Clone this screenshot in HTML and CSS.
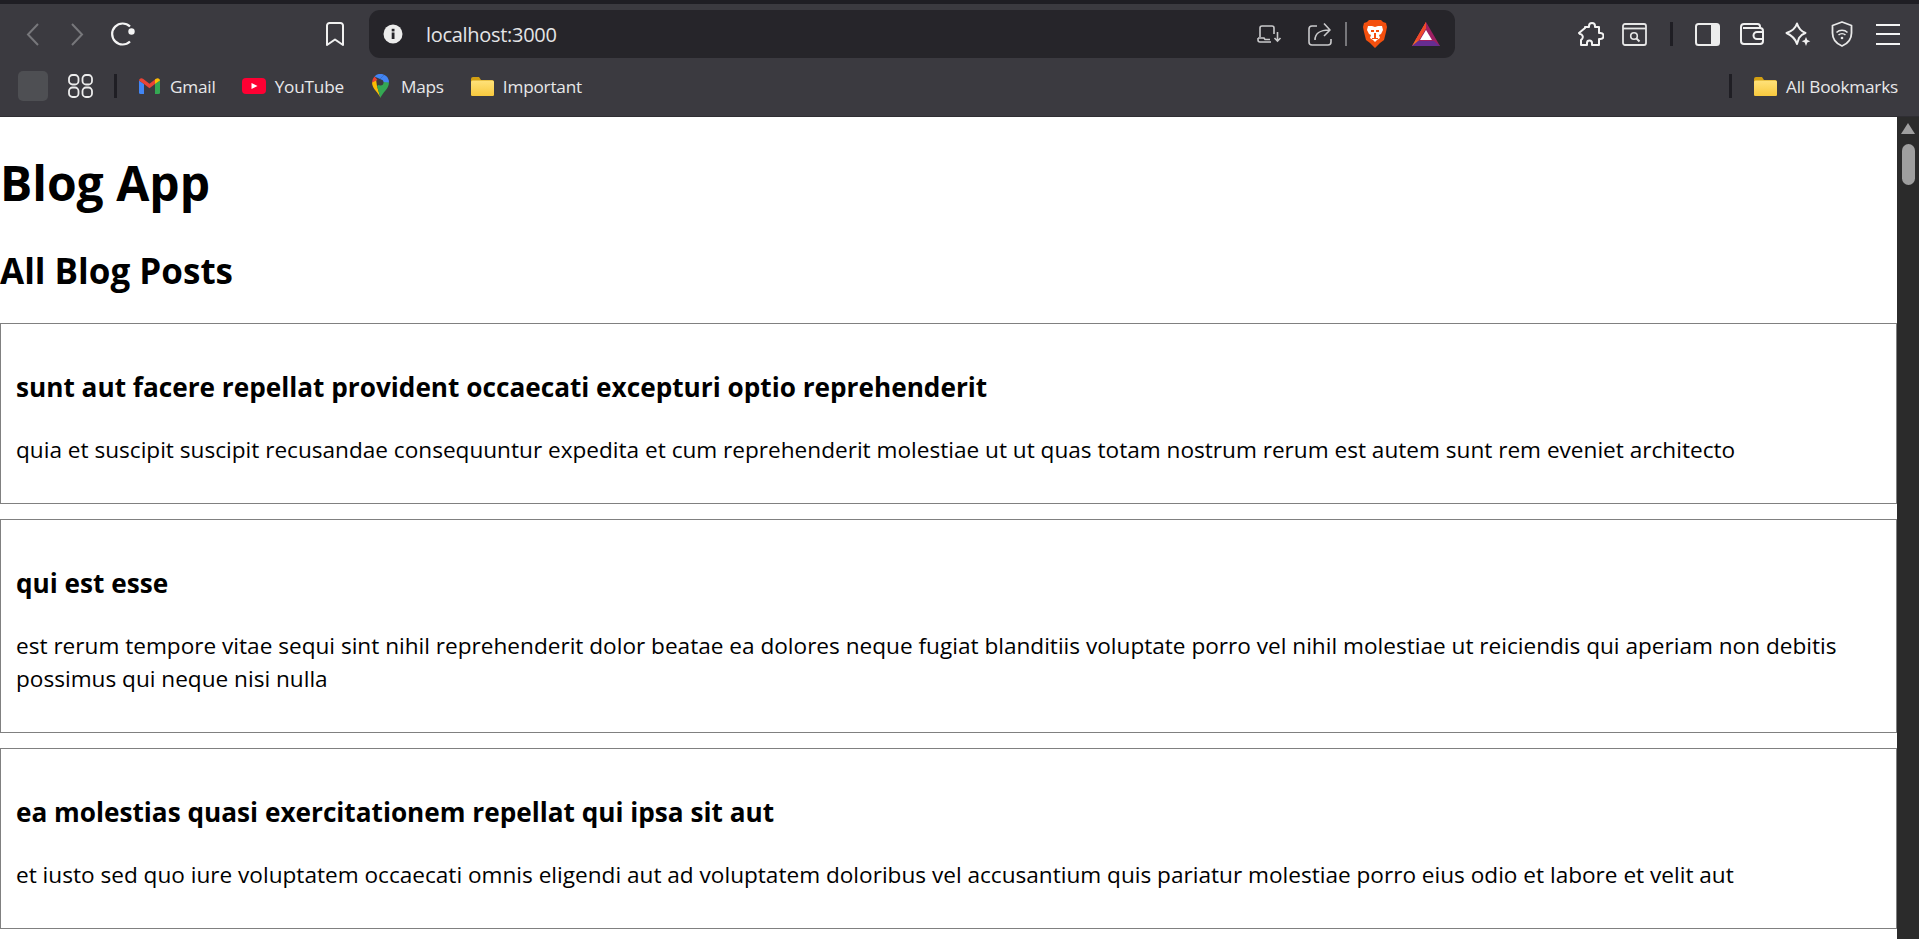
FILE: index.html
```html
<!DOCTYPE html>
<html lang="en">
<head>
    <meta charset="UTF-8">
    <meta name="viewport" content="width=device-width, initial-scale=1.0">
    <title>Blog App</title>
    <link rel="stylesheet" href="styles.css">
</head>
<body>

    <header class="chrome">
        <div class="toolbar">
            <svg class="back" width="13" height="23" viewBox="0 0 13 23" fill="none" stroke="#77777b" stroke-width="2"><path d="M12 1 2 11.5 12 22"/></svg>
            <svg class="forward" width="13" height="23" viewBox="0 0 13 23" fill="none" stroke="#77777b" stroke-width="2"><path d="M1 1 11 11.5 1 22"/></svg>
            <svg class="reload" width="26" height="24" viewBox="0 0 26 24" fill="none" stroke="#f4f4f4" stroke-width="2.2"><path d="M20 4.500A10.500 10.500 0 1 0 20 19.500"/><circle cx="21.500" cy="9.500" r="3.200" fill="#f4f4f4" stroke="none"/></svg>
            <svg class="bookmark" width="18" height="24" viewBox="0 0 18 24" fill="none" stroke="#f0f0f0" stroke-width="2" stroke-linejoin="round"><path d="M3.500 1h11A2.500 2.500 0 0 1 17 3.500V23l-8-5.500L1 23V3.500A2.500 2.500 0 0 1 3.500 1z"/></svg>

            <div class="urlbar">
                <svg class="info" width="20" height="20" viewBox="0 0 20 20"><circle cx="10" cy="10" r="9.500" fill="#ececec"/><rect x="8.700" y="8.500" width="2.800" height="6.500" fill="#26252a"/><rect x="8.700" y="4.800" width="2.800" height="2.600" fill="#26252a"/></svg>
                <span class="url">localhost:3000</span>
                <svg class="install" width="25" height="18" viewBox="0 0 25 18" fill="none" stroke="#c9c9cb" stroke-width="1.600"><path d="M17 9V3a2 2 0 0 0-2-2H5a2 2 0 0 0-2 2v9"/><path d="M1 13h6l1 1.500h5M1 13v2a2 2 0 0 0 2 2h11"/><path d="M20.500 7v9M17.500 13l3 3.200 3-3.200"/></svg>
                <svg class="share" width="24" height="24" viewBox="0 0 24 24" fill="none" stroke="#c9c9cb" stroke-width="1.600" stroke-linejoin="round"><path d="M9 4H4a3 3 0 0 0-3 3v13a3 3 0 0 0 3 3h16a3 3 0 0 0 3-3v-3"/><path d="M7 18c0-6 5-10 14-10M16 1.500l6 6.500-6 6"/></svg>
                <span class="urlbar-sep"></span>
                <svg class="brave" width="24" height="28" viewBox="0 0 24 28"><path d="M6 0h12l2 2 3 1 1 4-1 5-2 8-4 3-5 5-5-5-4-3-2-8-1-5 1-4 3-1z" fill="#f4500f"/><path d="M5 6h4l3 1 3-1h4l1 4-2 4-2 1 1 3-3 2-2 2-2-2-3-2 1-3-2-1-2-4z" fill="#fff"/><path d="M8 10h3v2H8zM13 10h3v2h-3zM11 13h2v5h-2zM9 18h6v1H9z" fill="#f4500f"/></svg>
                <svg class="bat" width="28" height="24" viewBox="0 0 28 24"><path d="M14 0 0 24h28z" fill="#9e1f63"/><path d="M14 0 0 24l5-3 9-15z" fill="#f26a21"/><path d="M14 0 3 19l4-1 7-12z" fill="#f0482a"/><path d="M0 24l6-5h16l6 5z" fill="#662d91"/><path d="M14 8l-6 10h12z" fill="#fff"/></svg>
            </div>

            <svg class="puzzle" width="26" height="24" viewBox="0 0 26 24" fill="none" stroke="#f2f2f2" stroke-width="2" stroke-linejoin="round"><path d="M7 5h4V4a3 3 0 0 1 6 0v1h4v6h1.500a3 3 0 0 1 0 6H21v6h-7v-2a2.500 2.500 0 0 0-5 0v2H3v-5l1-1a3 3 0 0 0-2-5l-1-1 6-5z"/></svg>
            <svg class="reader" width="25" height="23" viewBox="0 0 25 23" fill="none" stroke="#e6e6e6" stroke-width="1.800"><rect x="1" y="1" width="23" height="21" rx="2"/><path d="M1 5.500h23"/><circle cx="12" cy="13" r="3.300" stroke-width="1.600"/><path d="M14.500 15.500l3 3" stroke-width="2"/></svg>
            <span class="tool-sep"></span>
            <svg class="sidebar" width="25" height="23" viewBox="0 0 25 23"><rect x="1" y="1" width="23" height="21" rx="2.500" fill="none" stroke="#ececec" stroke-width="2"/><path d="M16 1h5.500A2.500 2.500 0 0 1 24 3.500v16a2.500 2.500 0 0 1-2.500 2.500H16z" fill="#ececec"/></svg>
            <svg class="wallet" width="24" height="22" viewBox="0 0 24 22" fill="none" stroke="#f0f0f0" stroke-width="2"><path d="M20 5V3.500A2.500 2.500 0 0 0 17.500 1H4a3 3 0 0 0-3 3v14a3 3 0 0 0 3 3h16a3 3 0 0 0 3-3V8a3 3 0 0 0-3-3H3"/><path d="M23 9h-6a3 3 0 0 0 0 7h6"/></svg>
            <svg class="spark" width="26" height="25" viewBox="0 0 26 25" fill="none" stroke="#f0f0f0" stroke-width="2" stroke-linejoin="round"><path d="M12 1.500c1.500 5 3.500 7.500 8.500 9.500-3 1-5 2.500-6.500 5l-2 6c-1.500-5-4-8-10.500-11 6-2 9-4.500 10.500-9.500z"/><path d="M21 15l1.300 3 3 1.300-3 1.300L21 24l-1.300-3.400-3-1.300 3-1.300z" fill="#f0f0f0" stroke="none"/></svg>
            <svg class="shield" width="22" height="26" viewBox="0 0 22 26" fill="none" stroke="#e8e8e8" stroke-width="1.800" stroke-linejoin="round"><path d="M11 1l9.500 3.500V12c0 6-3.500 10.500-9.500 13C5 22.500 1.500 18 1.500 12V4.500z"/><path d="M5.500 11.500c3-3 8-3 11 0M7.500 14c2-1.800 5-1.800 7 0" stroke-width="1.500"/><circle cx="11" cy="17" r="1.300" fill="#e8e8e8" stroke="none"/></svg>
            <div class="menu"><span></span><span></span><span></span></div>
        </div>

        <nav class="bookmarks">
            <span class="blank-tile"></span>
            <svg class="apps" width="25" height="24" viewBox="0 0 25 24" fill="none" stroke="#ececec" stroke-width="1.800"><rect x="1" y="1" width="9.500" height="9.500" rx="3.500"/><rect x="14.500" y="1" width="9.500" height="9.500" rx="3.500"/><rect x="1" y="13.500" width="9.500" height="9.500" rx="3.500"/><rect x="14.500" y="13.500" width="9.500" height="9.500" rx="3.500"/></svg>
            <span class="bar-sep"></span>
            <a class="mark gmail">
                <svg width="21" height="16" viewBox="0 0 21 16"><path d="M0 2.500V14.500A1.500 1.500 0 0 0 1.500 16H5V6z" fill="#4285f4"/><path d="M16 6v10h3.500a1.500 1.500 0 0 0 1.500-1.500V2.500z" fill="#34a853"/><path d="M0 2.500C0 .5 2.300-.6 4 .7l6.500 5 6.500-5L16 6l-5.500 4.200L5 6 0 2.500z" fill="#ea4335"/><path d="M16 1.500l1-.8c1.700-1.300 4-.2 4 1.800L16 6z" fill="#fbbc04"/></svg>
                Gmail
            </a>
            <a class="mark youtube">
                <svg width="24" height="16" viewBox="0 0 24 16"><rect width="24" height="16" rx="4" fill="#ff0033"/><path d="M9.500 5l6 3-6 3z" fill="#fff"/></svg>
                YouTube
            </a>
            <a class="mark maps">
                <svg width="17" height="24" viewBox="0 0 17 24"><path d="M8.500 24C7 19 0 15 0 8.500L4 5.500 5 12z" fill="#fbbc04"/><path d="M8.500 24c1.500-5 8.500-9 8.500-15.500L12 7 5 12z" fill="#34a853"/><path d="M2.500 2.500A8.500 8.500 0 0 0 0 8.500L5.500 6z" fill="#ea4335"/><path d="M2.500 2.500A8.500 8.500 0 0 1 12 .7L8 5z" fill="#4285f4"/><path d="M12 .7A8.500 8.500 0 0 1 17 8.500l-5.500-.5L8 5z" fill="#4285f4"/><circle cx="8.500" cy="8.500" r="3" fill="#3b3a40"/></svg>
                Maps
            </a>
            <a class="mark important">
                <svg width="23" height="19" viewBox="0 0 23 19"><use href="#folder"/></svg>
                Important
            </a>
            <span class="bar-sep push"></span>
            <a class="mark all">
                <svg width="23" height="19" viewBox="0 0 23 19"><use href="#folder"/></svg>
                All Bookmarks
            </a>
        </nav>
    </header>

    <svg class="defs" width="0" height="0">
        <defs>
            <linearGradient id="folder-fill" x1="0" y1="0" x2="0" y2="1">
                <stop offset="0" stop-color="#ffe27a"/>
                <stop offset="1" stop-color="#f8c93e"/>
            </linearGradient>
            <g id="folder">
                <path d="M0 2a2 2 0 0 1 2-2h6l2 3h11a2 2 0 0 1 2 2v12a2 2 0 0 1-2 2H2a2 2 0 0 1-2-2z" fill="#d29f12"/>
                <rect y="3.500" width="23" height="15.500" rx="1.500" fill="url(#folder-fill)"/>
            </g>
        </defs>
    </svg>

    <div class="viewport">
        <main class="page">
            <h1>Blog App</h1>
            <h2>All Blog Posts</h2>

            <article class="post">
                <h3>sunt aut facere repellat provident occaecati excepturi optio reprehenderit</h3>
                <p>quia et suscipit suscipit recusandae consequuntur expedita et cum reprehenderit molestiae ut ut quas totam nostrum rerum est autem sunt rem eveniet architecto</p>
            </article>

            <article class="post">
                <h3>qui est esse</h3>
                <p>est rerum tempore vitae sequi sint nihil reprehenderit dolor beatae ea dolores neque fugiat blanditiis voluptate porro vel nihil molestiae ut reiciendis qui aperiam non debitis possimus qui neque nisi nulla</p>
            </article>

            <article class="post">
                <h3>ea molestias quasi exercitationem repellat qui ipsa sit aut</h3>
                <p>et iusto sed quo iure voluptatem occaecati omnis eligendi aut ad voluptatem doloribus vel accusantium quis pariatur molestiae porro eius odio et labore et velit aut</p>
            </article>
        </main>

        <aside class="scrollbar">
            <span class="scroll-up"></span>
            <span class="scroll-thumb"></span>
        </aside>
    </div>

</body>
</html>
```

FILE: styles.css
```css
* {
    box-sizing: border-box;
}
body {
    margin: 0;
    height: 939px;
    overflow: hidden;
    display: flex;
    flex-direction: column;
    font-family: "Open Sans", "Noto Sans", sans-serif;
    background-color: #fff;
    color: #000;
}
svg {
    flex: none;
    display: block;
}
.defs {
    position: absolute;
}

/* browser top */
.chrome {
    height: 117px;
    flex: none;
    background-color: #3b3a40;
    border-top: 4px solid #1f1e24;
    border-bottom: 1px solid #2f2e33;
}
.toolbar {
    height: 60px;
    display: flex;
    align-items: center;
}
.back {
    margin-left: 26px;
}
.forward {
    margin-left: 32px;
}
.reload {
    margin-left: 26px;
}
.bookmark {
    margin-left: 190px;
}
.urlbar {
    width: 1086px;
    height: 48px;
    margin-left: 25px;
    display: flex;
    align-items: center;
    background-color: #26252a;
    border-radius: 11px;
    color: #e4e4e6;
}
.info {
    margin-left: 14px;
}
.url {
    margin-left: 23px;
    font-size: 20px;
    letter-spacing: -0.3px;
    width: 132px;
    white-space: nowrap;
}
.install {
    margin-left: 699px;
}
.share {
    margin-left: 26px;
}
.urlbar-sep {
    width: 1.5px;
    height: 24px;
    margin-left: 13px;
    background-color: #77777b;
}
.brave {
    margin-left: 16px;
}
.bat {
    margin-left: 25px;
}
.puzzle {
    margin-left: 123px;
}
.reader {
    margin-left: 18px;
}
.tool-sep {
    width: 3px;
    height: 24px;
    margin-left: 23px;
    background-color: #1f1e24;
}
.sidebar {
    margin-left: 22px;
}
.wallet {
    margin-left: 20px;
}
.spark {
    margin-left: 21px;
}
.shield {
    margin-left: 20px;
}
.menu {
    width: 24px;
    margin-left: 23px;
    display: flex;
    flex-direction: column;
    gap: 7.5px;
}
.menu span {
    height: 2px;
    background-color: #f4f4f4;
}

/* bookmarks row */
.bookmarks {
    height: 44px;
    display: flex;
    align-items: center;
    font-size: 17.2px;
    letter-spacing: -0.2px;
    color: #e8e8ea;
}
.blank-tile {
    width: 30px;
    height: 30px;
    margin-left: 18px;
    background-color: #4e4f53;
    border-radius: 5px;
}
.apps {
    margin-left: 20px;
}
.bar-sep {
    width: 3px;
    height: 24px;
    margin-left: 21px;
    background-color: #1f1e24;
}
.mark {
    display: flex;
    align-items: center;
    white-space: nowrap;
}
.gmail {
    margin-left: 22px;
    gap: 10px;
}
.youtube {
    margin-left: 26px;
    gap: 9px;
}
.maps {
    margin-left: 28px;
    gap: 12px;
}
.important {
    margin-left: 27px;
    gap: 9px;
}
.push {
    margin-left: auto;
}
.all {
    margin-left: 22px;
    margin-right: 21px;
    gap: 9px;
}

/* page */
.viewport {
    flex: 1;
    min-height: 0;
    display: flex;
}
.page {
    flex: 1;
    min-width: 0;
    overflow: hidden;
}
h1 {
    font-size: 48px;
    line-height: 64px;
    margin: 34px 0 32px;
}
h2 {
    font-size: 35px;
    line-height: 48px;
    margin: 0 0 28px;
}
.post {
    border: 1px solid #808080;
    padding: 15px;
    margin-bottom: 15px;
}
.post h3 {
    font-size: 26.2px;
    line-height: 37px;
    margin: 30px 0 27px;
}
.post p {
    font-size: 22.6px;
    line-height: 33px;
    margin: 0 0 22px;
}
.scrollbar {
    width: 22px;
    flex: none;
    background-color: #2b2b2b;
    display: flex;
    flex-direction: column;
    align-items: center;
}
.scroll-up {
    width: 0;
    height: 0;
    margin-top: 6px;
    border-left: 7.5px solid transparent;
    border-right: 7.5px solid transparent;
    border-bottom: 11px solid #9f9f9f;
}
.scroll-thumb {
    width: 13px;
    height: 41px;
    margin-top: 10px;
    background-color: #9f9f9f;
    border-radius: 6.5px;
}
```
